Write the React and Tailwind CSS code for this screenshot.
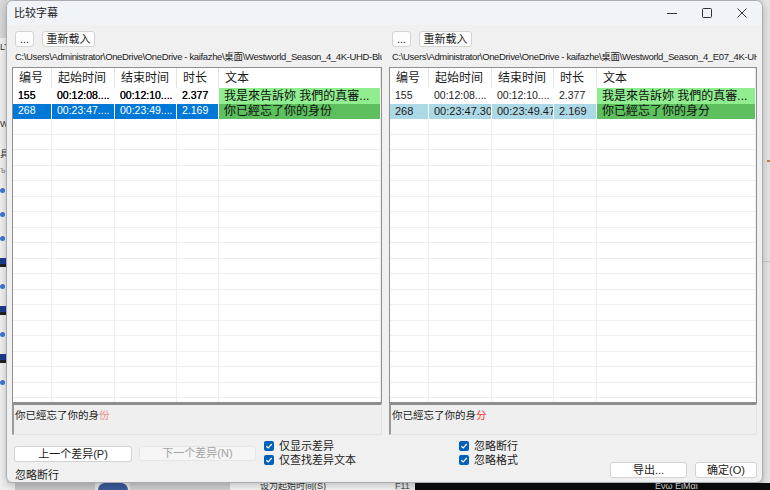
import React from "react";

const FONT = "font-['Liberation_Sans','Noto_Sans_CJK_SC',sans-serif]";
const HEAD = ["编号", "起始时间", "结束时间", "时长", "文本"];

function Check() {
  return (
    <span className="w-[10px] h-[10px] rounded-[2px] bg-[#005fb8] flex items-center justify-center shrink-0">
      <svg width="8" height="8" viewBox="0 0 8 8">
        <path d="M1.3 4.2 L3.2 6 L6.8 2" fill="none" stroke="#fff" strokeWidth="1.2" />
      </svg>
    </span>
  );
}

function CheckRow({ label }) {
  return (
    <div className="flex items-center gap-[5px] h-[14px]">
      <Check />
      <span className="text-[11px] text-[#1b1b1b] leading-none">{label}</span>
    </div>
  );
}

function Btn({ children, className = "" }) {
  return (
    <div
      className={
        "h-[16px] flex items-center justify-center bg-[#fdfdfd] border border-[#d3d3d3] rounded-[3px] text-[11px] text-[#1b1b1b] leading-none " +
        className
      }
    >
      {children}
    </div>
  );
}

function Table({ cols, rows }) {
  const empty = Array.from({ length: 20 });
  return (
    <div className="h-[336px] border border-[#8e8f8f] bg-white overflow-hidden flex flex-col">
      <div className="flex h-[20px] shrink-0">
        {HEAD.map((h, i) => (
          <div
            key={h}
            style={{ width: cols[i] }}
            className="shrink-0 h-full flex items-center pl-[6px] text-[12px] text-[#1b1b1b] border-r border-[#e5e5e5]"
          >
            {h}
          </div>
        ))}
      </div>
      {rows.map((r, ri) => (
        <div key={ri} className="flex h-[15.5px] shrink-0">
          {r.cells.map((c, i) => (
            <div
              key={i}
              style={{ width: cols[i] }}
              className={
                "shrink-0 h-full flex items-center overflow-hidden whitespace-nowrap border-r border-white " +
                (i === 4
                  ? r.textBg + " pl-[5px] text-[12px] text-[#101010]"
                  : r.bg + " pl-[5px] text-[10.5px] " + r.fg)
              }
            >
              {c}
            </div>
          ))}
        </div>
      ))}
      {empty.map((_, ri) => (
        <div key={"e" + ri} className="flex h-[15.5px] shrink-0 border-b border-[#f0f0f0]">
          {cols.map((w, i) => (
            <div key={i} style={{ width: w }} className="shrink-0 h-full border-r border-[#f0f0f0]" />
          ))}
        </div>
      ))}
    </div>
  );
}

function Panel({ width, path, cols, rows, diffText, diffChar, diffColor }) {
  return (
    <div style={{ width }} className="shrink-0 flex flex-col">
      <div className="flex items-center gap-[8px] pl-[3px] pt-[6px] h-[22px]">
        <Btn className="w-[19px] text-[10px]">...</Btn>
        <Btn className="w-[53px]">重新载入</Btn>
      </div>
      <div className="h-[20px] flex items-center pl-[3px] overflow-hidden whitespace-nowrap text-[9.5px] tracking-[-0.35px] text-[#1b1b1b]">
        {path}
      </div>
      <Table cols={cols} rows={rows} />
      <div className="h-[32px] bg-[#efefef] border-t-2 border-l-2 border-t-[#8d8d8d] border-l-[#9a9a9a] border-r border-b border-r-[#e3e3e3] border-b-[#e3e3e3] pl-[1px] pt-[3px] text-[10.5px] text-[#1b1b1b] leading-[14px]">
        {diffText}
        <span style={{ color: diffColor }}>{diffChar}</span>
      </div>
    </div>
  );
}

const row155 = {
  cells: ["155", "00:12:08....", "00:12:10....", "2.377", "我是來告訴妳 我們的真審..."],
  bg: "bg-white",
  fg: "text-[#000] [text-shadow:0_0_0.3px_#000]",
  textBg: "bg-[#90ee90]",
};

export default function App() {
  const leftRows = [
    row155,
    {
      cells: ["268", "00:23:47....", "00:23:49....", "2.169", "你已經忘了你的身份"],
      bg: "bg-[#0078d7]",
      fg: "text-white",
      textBg: "bg-[#5dbf5d]",
    },
  ];
  const rightRows = [
    { ...row155, fg: "text-[#1b1b1b]" },
    {
      cells: ["268", "00:23:47.30", "00:23:49.47", "2.169", "你已經忘了你的身分"],
      bg: "bg-[#add8e6]",
      fg: "text-[#1b1b1b] text-[11px]",
      textBg: "bg-[#5dbf5d]",
    },
  ];

  return (
    <div className={"w-[770px] h-[490px] relative overflow-hidden bg-[#dedede] " + FONT}>
      {/* background application, left strip */}
      <div className="absolute left-0 top-0 w-[7px] h-[483px] bg-[#f2f2f2] flex flex-col items-start overflow-hidden">
        <div className="h-[38px] w-full bg-[#d9d9d9]" />
        <div className="text-[9px] leading-[18px] text-[#333]">LT</div>
        <div className="h-[60px]" />
        <div className="text-[9px] leading-[16px] text-[#333]">W</div>
        <div className="text-[9px] leading-[16px] text-[#333] mt-[14px]">具</div>
        <div className="text-[9px] leading-[16px] text-[#888]">ъ</div>
        {["e", "e", "e", "s", "e", "s", "e", "s", "e"].map((k, i) => (
          <div key={i} className="h-[24px] flex items-center">
            {k === "e" ? (
              <span className="w-[5px] h-[5px] rounded-full bg-[#3a7bd5]" />
            ) : (
              <span className="w-[6px] h-[9px] bg-[#1d3f8f] border-b-[3px] border-[#222]" />
            )}
          </div>
        ))}
      </div>
      {/* right strip */}
      <div className="absolute right-0 top-0 w-[7px] h-[483px] bg-[#e6e6e6] flex flex-col">
        <div className="h-[160px]" />
        <div className="h-[2px] w-[3px] bg-[#c08040] ml-[4px]" />
        <div className="h-[100px] border-b border-[#c8c8c8]" />
      </div>
      {/* bottom strip */}
      <div className="absolute left-0 top-[483px] w-[770px] h-[7px] flex overflow-hidden text-[9px] leading-[7px]">
        <div className="w-[15px] bg-[#efefef]" />
        <div className="w-[80px] bg-[#c9c9c9]" />
        <div className="w-[35px] bg-[#e5e5e5] flex justify-center">
          <span className="w-[30px] h-[7px] rounded-t-full bg-[#3b5b9a]" />
        </div>
        <div className="w-[100px] bg-[#d0d0d0]" />
        <div className="w-[165px] bg-[#f5f5f5] pl-[30px] text-[#333] overflow-hidden whitespace-nowrap">设为起始时间(S)</div>
        <div className="w-[20px] bg-[#e8e8e8] text-[#555]">F11</div>
        <div className="flex-1 bg-[#0c0c0c] pl-[240px] text-[#ddd] overflow-hidden whitespace-nowrap">Ενω ΕιΜαι</div>
      </div>

      {/* dialog window */}
      <div className="absolute left-[6px] top-0 w-[757px] h-[483px] rounded-t-[7px] rounded-b-[6px] border border-[#a9adb3] bg-[#f0f0f0] flex flex-col overflow-hidden shadow-[0_2px_8px_rgba(0,0,0,0.25)]">
        {/* title bar */}
        <div className="h-[24px] shrink-0 bg-[#f0f4f9] flex items-center">
          <span className="ml-[7px] text-[11px] text-[#1b1b1b]">比较字幕</span>
          <div className="ml-auto flex items-center h-full">
            <div className="w-[35px] h-full flex items-center justify-center">
              <svg width="10" height="10" viewBox="0 0 10 10">
                <path d="M0 5.5 H10" stroke="#333" strokeWidth="1" />
              </svg>
            </div>
            <div className="w-[35px] h-full flex items-center justify-center">
              <svg width="10" height="10" viewBox="0 0 10 10">
                <rect x="0.5" y="0.5" width="9" height="9" rx="1" fill="none" stroke="#333" strokeWidth="1" />
              </svg>
            </div>
            <div className="w-[35px] h-full flex items-center justify-center mr-[3px]">
              <svg width="10" height="10" viewBox="0 0 10 10">
                <path d="M0.5 0.5 L9.5 9.5 M9.5 0.5 L0.5 9.5" stroke="#333" strokeWidth="1" />
              </svg>
            </div>
          </div>
        </div>

        {/* panels */}
        <div className="flex pl-[5px] gap-[7px]">
          <Panel
            width={370}
            cols={[39, 63, 62, 42, 162]}
            rows={leftRows}
            path={"C:\\Users\\Administrator\\OneDrive\\OneDrive - kaifazhe\\桌面\\Westworld_Season_4_4K-UHD-Blu-ray_"}
            diffText="你已經忘了你的身"
            diffChar="份"
            diffColor="#f08a8a"
          />
          <Panel
            width={368}
            cols={[39, 63, 62, 43, 159]}
            rows={rightRows}
            path={"C:\\Users\\Administrator\\OneDrive\\OneDrive - kaifazhe\\桌面\\Westworld_Season_4_E07_4K-UHD-Blu-ray"}
            diffText="你已經忘了你的身"
            diffChar="分"
            diffColor="#ff2a2a"
          />
        </div>

        {/* bottom controls */}
        <div className="flex flex-1 pl-[7px] pr-[5px]">
          <div className="w-[242px] flex flex-col">
            <div className="flex gap-[7px] mt-[11px]">
              <Btn className="w-[118px] h-[15px] bg-white border-[#cfcfcf]">上一个差异(P)</Btn>
              <div className="w-[117px] h-[15px] flex items-center justify-center bg-[#f5f5f5] border border-[#e6e6e6] rounded-[3px] text-[11px] text-[#a3a3a3] leading-none">
                下一个差异(N)
              </div>
            </div>
            <div className="mt-[6px] pl-[1px] text-[11px] text-[#1b1b1b] leading-[14px]">忽略断行</div>
          </div>
          <div className="ml-[8px] w-[195px] flex flex-col gap-[0px] pt-[4px]">
            <CheckRow label="仅显示差异" />
            <CheckRow label="仅查找差异文本" />
          </div>
          <div className="flex flex-col pt-[4px]">
            <CheckRow label="忽略断行" />
            <CheckRow label="忽略格式" />
          </div>
          <div className="ml-auto flex gap-[8px] pt-[27px]">
            <Btn className="w-[77px] h-[15px] bg-white">导出...</Btn>
            <Btn className="w-[62px] h-[15px] bg-white">确定(O)</Btn>
          </div>
        </div>
      </div>
    </div>
  );
}
